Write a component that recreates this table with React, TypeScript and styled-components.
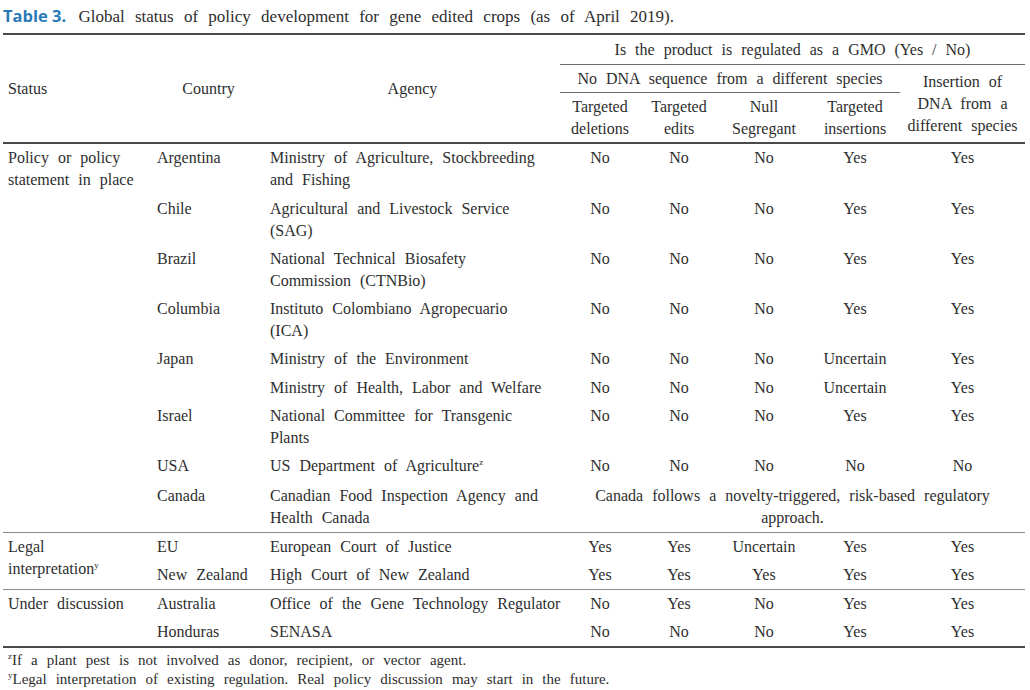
import React from 'react';
import styled, { createGlobalStyle } from 'styled-components';

const serif = `"Liberation Serif", "Times New Roman", Times, serif`;

const GlobalStyle = createGlobalStyle`
  html, body {
    margin: 0;
    padding: 0;
    background: #ffffff;
  }
  body {
    font-family: ${serif};
    color: #2e2e2e;
  }
`;

const Page = styled.div`
  width: 1030px;
  height: 690px;
  overflow: hidden;
  padding: 0 5px 0 3px;
  box-sizing: border-box;
  font-family: ${serif};
  color: #2e2e2e;
`;

const Caption = styled.div`
  height: 33px;
  padding-top: 4px;
  box-sizing: border-box;
  font-family: ${serif};
  font-size: 17px;
  line-height: 24px;
  word-spacing: 6px;
  white-space: nowrap;
  >b {
    font-family: "Open Sans", "Liberation Sans", sans-serif;
    font-size: 16.5px;
    font-weight: 700;
    color: #2a7ab8;
    word-spacing: 0;
    margin-right: 2px;
  }
`;

const Table = styled.table`
  width: 1022px;
  border-collapse: collapse;
  table-layout: fixed;
  font-family: ${serif};
  color: #2e2e2e;
  font-size: 16px;
  line-height: 22px;
  word-spacing: 5px;
  thead {
    border-top: 2px solid #4a4a4a;
    border-bottom: 2px solid #4a4a4a;
  }
  tbody {
    border-bottom: 1.5px solid #8a8a8a;
  }
  tbody:last-child {
    border-bottom: 2px solid #4a4a4a;
  }
`;

const Head = styled.th<{ $align?: string; $rule?: boolean; $pad?: number }>`
  font-weight: normal;
  padding: ${(p) => p.$pad ?? 2.5}px 5px;
  vertical-align: middle;
  text-align: ${(p) => p.$align || 'center'};
  white-space: nowrap;
  border-bottom: ${(p) => (p.$rule ? '1.5px solid #6a6a6a' : 'none')};
`;

const Cell = styled.td<{ $center?: boolean; $top?: number }>`
  padding: ${(p) => p.$top ?? 3.25}px 5px 3px 5px;
  vertical-align: top;
  white-space: nowrap;
  text-align: ${(p) => (p.$center ? 'center' : 'left')};
`;

const Note = styled.div`
  font-family: ${serif};
  font-size: 15px;
  line-height: 19px;
  word-spacing: 5.3px;
  padding-left: 5px;
  padding-top: 3px;
  white-space: nowrap;
`;

const Sup = styled.sup`
  font-size: 9px;
  line-height: 0;
  vertical-align: 6px;
  word-spacing: 0;
`;

interface IRow {
  status?: { lines: React.ReactNode[]; span: number };
  country?: { name: string; span: number };
  agency: React.ReactNode[];
  values?: string[];
  note?: string[];
  top?: number;
}

const groups: IRow[][] = [
  [
    {
      status: { lines: ['Policy or policy', 'statement in place'], span: 9 },
      country: { name: 'Argentina', span: 1 },
      agency: ['Ministry of Agriculture, Stockbreeding', 'and Fishing'],
      values: ['No', 'No', 'No', 'Yes', 'Yes'],
    },
    {
      country: { name: 'Chile', span: 1 },
      agency: ['Agricultural and Livestock Service', '(SAG)'],
      values: ['No', 'No', 'No', 'Yes', 'Yes'],
    },
    {
      country: { name: 'Brazil', span: 1 },
      agency: ['National Technical Biosafety', 'Commission (CTNBio)'],
      values: ['No', 'No', 'No', 'Yes', 'Yes'],
    },
    {
      country: { name: 'Columbia', span: 1 },
      agency: ['Instituto Colombiano Agropecuario', '(ICA)'],
      values: ['No', 'No', 'No', 'Yes', 'Yes'],
    },
    {
      country: { name: 'Japan', span: 2 },
      agency: ['Ministry of the Environment'],
      values: ['No', 'No', 'No', 'Uncertain', 'Yes'],
    },
    {
      agency: ['Ministry of Health, Labor and Welfare'],
      values: ['No', 'No', 'No', 'Uncertain', 'Yes'],
    },
    {
      country: { name: 'Israel', span: 1 },
      agency: ['National Committee for Transgenic', 'Plants'],
      values: ['No', 'No', 'No', 'Yes', 'Yes'],
    },
    {
      country: { name: 'USA', span: 1 },
      agency: [<>US Department of Agriculture<Sup>z</Sup></>],
      values: ['No', 'No', 'No', 'No', 'No'],
    },
    {
      country: { name: 'Canada', span: 1 },
      agency: ['Canadian Food Inspection Agency and', 'Health Canada'],
      note: ['Canada follows a novelty-triggered, risk-based regulatory', 'approach.'],
      top: 5,
    },
  ],
  [
    {
      status: { lines: ['Legal', <>interpretation<Sup>y</Sup></>], span: 2 },
      country: { name: 'EU', span: 1 },
      agency: ['European Court of Justice'],
      values: ['Yes', 'Yes', 'Uncertain', 'Yes', 'Yes'],
      top: 2.5,
    },
    {
      country: { name: 'New Zealand', span: 1 },
      agency: ['High Court of New Zealand'],
      values: ['Yes', 'Yes', 'Yes', 'Yes', 'Yes'],
    },
  ],
  [
    {
      status: { lines: ['Under discussion'], span: 2 },
      country: { name: 'Australia', span: 1 },
      agency: ['Office of the Gene Technology Regulator'],
      values: ['No', 'Yes', 'No', 'Yes', 'Yes'],
    },
    {
      country: { name: 'Honduras', span: 1 },
      agency: ['SENASA'],
      values: ['No', 'No', 'No', 'Yes', 'Yes'],
    },
  ],
];

function Lines(props: { lines: React.ReactNode[] }) {
  return (
    <>
      {props.lines.map((l, i) => (
        <React.Fragment key={i}>
          {i > 0 && <br />}
          {l}
        </React.Fragment>
      ))}
    </>
  );
}

function App() {
  function renderRow(row: IRow, i: number) {
    const top = row.top;
    return (
      <tr key={i}>
        {row.status && (
          <Cell rowSpan={row.status.span} $top={top}>
            <Lines lines={row.status.lines} />
          </Cell>
        )}
        {row.country && (
          <Cell rowSpan={row.country.span} $top={top}>
            {row.country.name}
          </Cell>
        )}
        <Cell $top={top}>
          <Lines lines={row.agency} />
        </Cell>
        {row.values &&
          row.values.map((v, j) => (
            <Cell key={j} $center $top={top}>
              {v}
            </Cell>
          ))}
        {row.note && (
          <Cell colSpan={5} $center $top={top}>
            <Lines lines={row.note} />
          </Cell>
        )}
      </tr>
    );
  }

  return (
    <Page>
      <GlobalStyle />
      <Caption>
        <b>Table 3.</b> Global status of policy development for gene edited crops (as of April 2019).
      </Caption>
      <Table>
        <colgroup>
          <col style={{ width: 149 }} />
          <col style={{ width: 113 }} />
          <col style={{ width: 295 }} />
          <col style={{ width: 80 }} />
          <col style={{ width: 78 }} />
          <col style={{ width: 92 }} />
          <col style={{ width: 90 }} />
          <col style={{ width: 125 }} />
        </colgroup>
        <thead>
          <tr>
            <Head rowSpan={3} $align="left">Status</Head>
            <Head rowSpan={3}>Country</Head>
            <Head rowSpan={3}>Agency</Head>
            <Head colSpan={5} $rule $pad={3.5}>Is the product is regulated as a GMO (Yes / No)</Head>
          </tr>
          <tr>
            <Head colSpan={4} $rule $pad={2.5}>No DNA sequence from a different species</Head>
            <Head rowSpan={2}>
              Insertion of
              <br />
              DNA from a
              <br />
              different species
            </Head>
          </tr>
          <tr>
            <Head>Targeted<br />deletions</Head>
            <Head>Targeted<br />edits</Head>
            <Head>Null<br />Segregant</Head>
            <Head>Targeted<br />insertions</Head>
          </tr>
        </thead>
        {groups.map((g, gi) => (
          <tbody key={gi}>{g.map(renderRow)}</tbody>
        ))}
      </Table>
      <Note>
        <Sup>z</Sup>If a plant pest is not involved as donor, recipient, or vector agent.
        <br />
        <Sup>y</Sup>Legal interpretation of existing regulation. Real policy discussion may start in the future.
      </Note>
    </Page>
  );
}

export default App;
